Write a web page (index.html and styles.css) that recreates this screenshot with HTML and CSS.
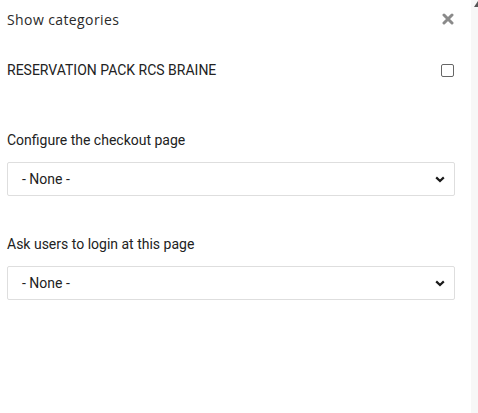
FILE: index.html
```html
<!DOCTYPE html>
<html>
<head>
<meta charset="utf-8">
<link rel="stylesheet" href="styles.css">
</head>
<body>
<div class="page">
  <div class="panel">
    <div class="header">
      <span class="title">Show categories</span>
      <svg class="close" width="12" height="12" viewBox="0 0 12 12"><path d="M2 2 L10 10 M10 2 L2 10" stroke="#8a8a8a" stroke-width="3" stroke-linecap="round"/></svg>
    </div>
    <label class="check-row">
      <span class="check-label">RESERVATION PACK RCS BRAINE</span>
      <span class="checkbox"></span>
    </label>
    <div class="field">
      <div class="field-label">Configure the checkout page</div>
      <div class="select">
        <span class="select-value">- None -</span>
        <svg class="chevron" width="10" height="7" viewBox="0 0 10 7"><path d="M1.2 1.4 L5 5 L8.8 1.4" fill="none" stroke="#1a1a1a" stroke-width="2.2"/></svg>
      </div>
    </div>
    <div class="field">
      <div class="field-label">Ask users to login at this page</div>
      <div class="select">
        <span class="select-value">- None -</span>
        <svg class="chevron" width="10" height="7" viewBox="0 0 10 7"><path d="M1.2 1.4 L5 5 L8.8 1.4" fill="none" stroke="#1a1a1a" stroke-width="2.2"/></svg>
      </div>
    </div>
  </div>
  <div class="scrollbar">
    <span class="arrow"></span>
  </div>
</div>
</body>
</html>
```
FILE: styles.css
```css
html, body {
  margin: 0;
  padding: 0;
  background: #fff;
}
.page {
  display: flex;
  width: 478px;
  height: 413px;
  overflow: hidden;
}
.panel {
  width: 448px;
  padding: 0 0 0 7px;
  font-family: Roboto, "Liberation Sans", sans-serif;
  color: #222;
}
.scrollbar {
  margin-left: auto;
  width: 7px;
  background: #f7f7f7;
  position: relative;
}
.arrow {
  position: absolute;
  top: 1px;
  right: 0;
  width: 0;
  height: 0;
  border-left: 4px solid transparent;
  border-right: 0 solid transparent;
  border-bottom: 6px solid #555;
}
.header {
  display: flex;
  align-items: center;
  justify-content: space-between;
  height: 22px;
  margin-top: 8px;
}
.title {
  font-family: "Open Sans", "Noto Sans", sans-serif;
  font-size: 14px;
  letter-spacing: 0.4px;
  color: #2a2a2a;
}
.close {
  margin-right: 1px;
}
.check-row {
  display: flex;
  align-items: center;
  justify-content: space-between;
  margin-top: 30px;
  height: 20px;
}
.check-label {
  font-size: 14px;
  color: #222;
}
.checkbox {
  width: 11px;
  height: 11px;
  border: 1px solid #666;
  border-radius: 2px;
  margin-right: 1px;
}
.field {
  margin-top: 50px;
}
.field + .field {
  margin-top: 38px;
}
.field-label {
  font-size: 14px;
  color: #222;
  line-height: 20px;
}
.select {
  margin-top: 12px;
  height: 32px;
  border: 1px solid #dedede;
  border-radius: 2px;
  display: flex;
  align-items: center;
  justify-content: space-between;
  padding: 0 9px 0 14px;
}
.select-value {
  font-size: 14px;
  color: #222;
}
```
